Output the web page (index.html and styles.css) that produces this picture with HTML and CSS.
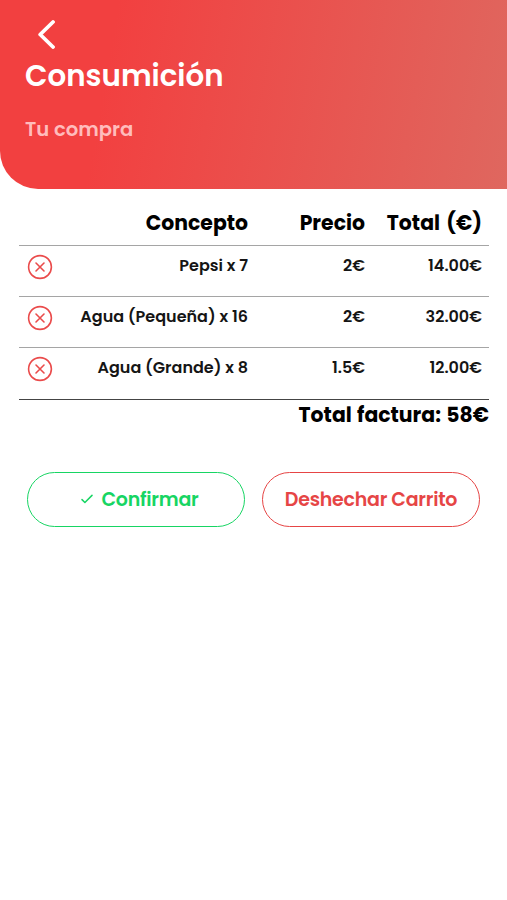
FILE: index.html
```html
<!DOCTYPE html>
<html lang="es">
<head>
  <meta charset="UTF-8" />
  <meta name="viewport" content="width=device-width, initial-scale=1.0"/>
  <title>Consumición</title>
  <link rel="stylesheet" href="styles.css">
</head>
<body>

  <!-- Header -->
  <header class="header">
    <a href="#" class="back" aria-label="Volver">
      <svg width="18" height="30" viewBox="0 0 18 30"><path d="M16 3 3.200 15.500 16 28"/></svg>
    </a>
    <h1>Consumición</h1>
    <p>Tu compra</p>
  </header>

  <!-- Cart -->
  <main class="cart">
    <table>
      <colgroup>
        <col class="col-remove"><col class="col-item"><col class="col-price"><col class="col-total">
      </colgroup>
      <thead>
        <tr>
          <th></th>
          <th>Concepto</th>
          <th>Precio</th>
          <th>Total (€)</th>
        </tr>
      </thead>
      <tbody>
        <tr>
          <td class="remove"><svg width="26" height="26" viewBox="0 0 26 26"><circle cx="13" cy="13" r="11.400"/><path d="m9 9 8 8m0-8-8 8"/></svg></td>
          <td>Pepsi x 7</td>
          <td>2€</td>
          <td>14.00€</td>
        </tr>
        <tr>
          <td class="remove"><svg width="26" height="26" viewBox="0 0 26 26"><circle cx="13" cy="13" r="11.400"/><path d="m9 9 8 8m0-8-8 8"/></svg></td>
          <td>Agua (Pequeña) x 16</td>
          <td>2€</td>
          <td>32.00€</td>
        </tr>
        <tr>
          <td class="remove"><svg width="26" height="26" viewBox="0 0 26 26"><circle cx="13" cy="13" r="11.400"/><path d="m9 9 8 8m0-8-8 8"/></svg></td>
          <td>Agua (Grande) x 8</td>
          <td>1.5€</td>
          <td>12.00€</td>
        </tr>
      </tbody>
    </table>
    <div class="invoice-total">Total factura: 58€</div>

    <div class="actions">
      <button class="btn confirm">
        <svg width="12" height="10" viewBox="0 0 12 10"><path d="M1 5.600 3.900 8.500 11 1.400"/></svg>
        Confirmar
      </button>
      <button class="btn discard">Deshechar Carrito</button>
    </div>
  </main>

</body>
</html>
```
FILE: styles.css
```css
* { box-sizing: border-box; margin: 0; padding: 0; }
body {
  font-family: Poppins, Inter, sans-serif;
  background: #fff;
  color: #000;
  min-height: 100vh;
}

/* Header */
.header {
  height: 188.5px;
  padding: 19px 25px 0;
  border-bottom-left-radius: 38px;
  background: linear-gradient(100deg, #f24040 22%, #df675f 100%);
  color: #fff;
}
.back {
  display: block;
  width: 18px;
  height: 30px;
  margin-left: 12px;
}
.back svg {
  display: block;
  fill: none;
  stroke: #fff;
  stroke-width: 3.8;
  stroke-linecap: round;
  stroke-linejoin: round;
}
.header h1 {
  margin-top: 8px;
  font-size: 29.3px;
  line-height: 38px;
  font-weight: 600;
}
.header p {
  margin-top: 19px;
  font-size: 19.6px;
  line-height: 30px;
  font-weight: 600;
  color: #ffbcbc;
}

/* Cart table */
.cart { padding: 12.5px 18px 0 19px; }
table {
  width: 100%;
  table-layout: fixed;
  border-collapse: collapse;
  border-bottom: 1px solid #444;
}
.col-remove { width: 42px; }
.col-item { width: 194px; }
.col-price { width: 117px; }
.col-total { width: 117px; }
th, td {
  padding: 0 7px;
  text-align: right;
  vertical-align: top;
  white-space: nowrap;
}
th {
  height: 44px;
  padding-top: 7px;
  font-size: 20.4px;
  line-height: 30px;
  font-weight: 700;
  word-spacing: 2px;
}
td {
  height: 51.4px;
  padding-top: 8px;
  border-top: 1px solid #a5a5a5;
  font-size: 16px;
  line-height: 24px;
  font-weight: 600;
  color: #151515;
}
.remove { padding: 8px 0 0 8px; }
.remove svg {
  display: block;
  fill: none;
  stroke: #ea4b4b;
  stroke-width: 1.6;
  stroke-linecap: round;
}
.invoice-total {
  font-size: 20.4px;
  line-height: 30px;
  font-weight: 700;
  word-spacing: 1px;
  text-align: right;
  white-space: nowrap;
}

/* Buttons */
.actions {
  display: flex;
  gap: 17px;
  margin: 42px 9px 0 8px;
}
.btn {
  display: flex;
  flex: 0 0 218px;
  align-items: center;
  justify-content: center;
  gap: 8px;
  height: 55px;
  border: 1.5px solid;
  border-radius: 28px;
  background: #fff;
  font-family: inherit;
  font-size: 19px;
  font-weight: 600;
  letter-spacing: -0.25px;
  white-space: nowrap;
  cursor: pointer;
}
.confirm { padding-left: 8px; color: #17d563; }
.discard { color: #e64545; }
.confirm svg {
  fill: none;
  stroke: currentColor;
  stroke-width: 1.5;
  stroke-linecap: round;
  stroke-linejoin: round;
}
```
